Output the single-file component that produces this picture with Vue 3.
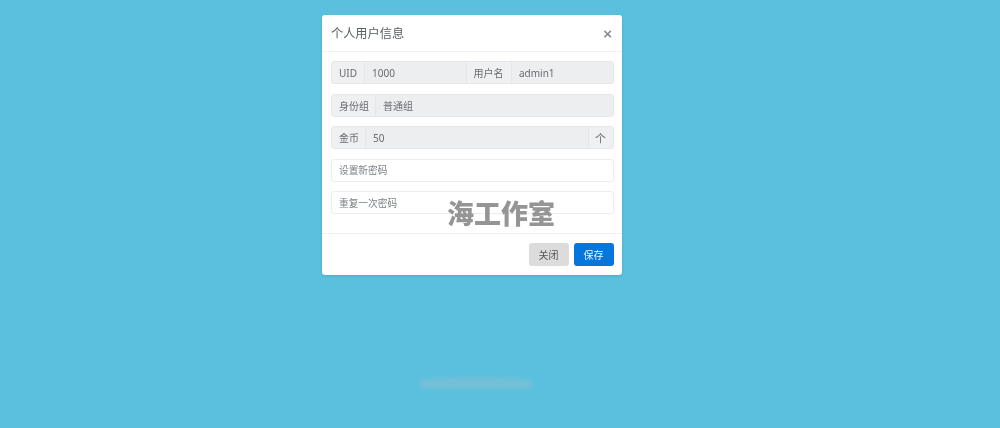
<script setup>
const title = '个人用户信息'
</script>

<template>
  <div class="page">
    <div class="modal">
      <header class="head">
        <h5 class="title">{{ title }}</h5>
        <span class="close">×</span>
      </header>
      <div class="body">
        <div class="group">
          <span class="addon uid">UID</span>
          <span class="field filled grow">1000</span>
          <span class="addon mid">用户名</span>
          <span class="field filled name">admin1</span>
        </div>
        <div class="group">
          <span class="addon">身份组</span>
          <span class="field filled grow">普通组</span>
        </div>
        <div class="group">
          <span class="addon">金币</span>
          <span class="field filled grow">50</span>
          <span class="addon end">个</span>
        </div>
        <div class="group plain">
          <span class="field hint grow">设置新密码</span>
        </div>
        <div class="group plain">
          <span class="field hint grow">重复一次密码</span>
        </div>
      </div>
      <footer class="foot">
        <button class="btn grey">关闭</button>
        <button class="btn blue">保存</button>
      </footer>
    </div>
    <div class="mark">海工作室</div>
    <div class="smudge"></div>
  </div>
</template>

<style>
html, body { margin: 0; background: #5bc0de; }
</style>

<style scoped>
.page {
  position: relative;
  height: 428px;
  overflow: hidden;
  background: #5bc0de;
  display: flex;
  justify-content: center;
  align-items: flex-start;
  padding-top: 15px;
  box-sizing: border-box;
  font-family: "Noto Sans", "Liberation Sans", "Noto Sans CJK SC", sans-serif;
  color: #555b62;
}
.modal {
  width: 300px;
  height: 260px;
  margin-left: -56px;
  background: #fff;
  border-radius: 3px;
  box-shadow: 0 1px 3px rgba(0, 0, 0, 0.12);
  display: flex;
  flex-direction: column;
  filter: blur(0.45px);
}
.head {
  height: 37px;
  box-sizing: border-box;
  padding: 0 9px;
  border-bottom: 1px solid #f0f1f3;
  display: flex;
  align-items: center;
  justify-content: space-between;
}
.title {
  margin: 0;
  font-size: 12.2px;
  font-weight: 400;
  color: #585e64;
  font-family: "Noto Sans CJK SC", sans-serif;
}
.close {
  font-size: 15px;
  font-weight: 700;
  color: #8a8e93;
  line-height: 1;
  margin-top: 1px;
  margin-right: 1px;
  font-family: "Liberation Sans", sans-serif;
}
.body {
  padding: 9px 8.5px 0;
  display: flex;
  flex-direction: column;
  gap: 9.5px;
  height: 182px;
  box-sizing: border-box;
  border-bottom: 1px solid #f0f1f3;
}
.group {
  display: flex;
  height: 23px;
  box-sizing: border-box;
  border: 1px solid #e5e7ea;
  border-radius: 3px;
  font-size: 10px;
  background: #eceef0;
  overflow: hidden;
}
.group.plain {
  background: #fff;
  border-color: #eaecef;
}
.addon {
  padding: 0 6px 0 7.5px;
  flex: none;
  display: flex;
  align-items: center;
  color: #686d73;
  font-family: "Noto Sans CJK SC", sans-serif;
  background: #eff0f2;
  border-right: 1px solid #e4e6e9;
}
.addon.uid {
  font-family: "Noto Sans", sans-serif;
  width: 18px;
  padding: 0 7px 0 7.5px;
}
.addon.mid {
  border-left: 1px solid #e4e6e9;
  padding: 0 7px;
}
.addon.end {
  border-right: 0;
  border-left: 1px solid #e4e6e9;
  padding: 0 6.5px;
  font-size: 11px;
}
.field {
  padding: 0 7px;
  display: flex;
  align-items: center;
  color: #686d73;
  font-family: "Noto Sans", "Noto Sans CJK SC", sans-serif;
}
.grow { flex: 1; }
.name { width: 86.5px; flex: none; padding-left: 7.5px; }
.hint {
  font-size: 9.7px;
  color: #7b8086;
  padding-left: 7.5px;
}
.foot {
  flex: 1;
  padding: 0 8.5px 9px;
  display: flex;
  justify-content: flex-end;
  align-items: flex-end;
  gap: 5px;
}
.btn {
  width: 40px;
  height: 23px;
  padding: 0;
  border: 0;
  border-radius: 3px;
  font-size: 10px;
  font-family: "Noto Sans CJK SC", sans-serif;
}
.grey { background: #dcdcdc; color: #555; }
.blue { background: #0577dc; color: #e8f3fd; }
.mark {
  position: absolute;
  left: 447px;
  top: 197px;
  font-family: "Noto Sans CJK SC", sans-serif;
  font-size: 27px;
  line-height: 32px;
  font-weight: 900;
  color: #959595;
  filter: blur(0.5px);
}
.smudge {
  position: absolute;
  left: 420px;
  top: 378px;
  width: 112px;
  height: 11px;
  background: rgba(170, 190, 200, 0.33);
  border-radius: 30% 30% 15% 15%;
  filter: blur(2.5px);
}
</style>
